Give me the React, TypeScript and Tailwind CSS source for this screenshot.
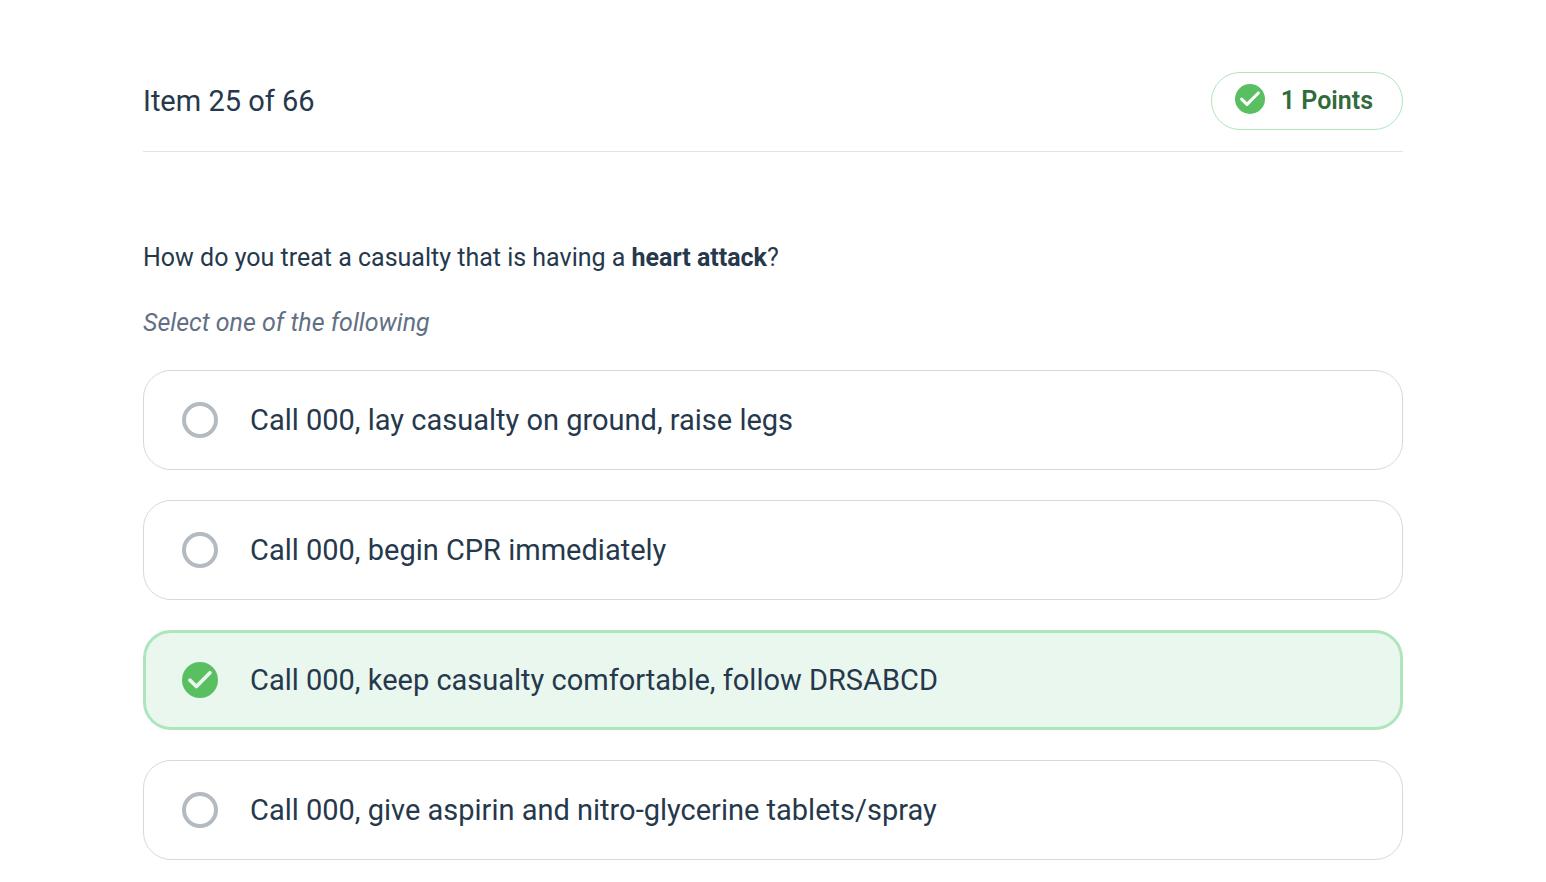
import { useState } from "react";

interface Answer {
  id: string;
  text: string;
}

const answers: Answer[] = [
  { id: "legs", text: "Call 000, lay casualty on ground, raise legs" },
  { id: "cpr", text: "Call 000, begin CPR immediately" },
  { id: "drsabcd", text: "Call 000, keep casualty comfortable, follow DRSABCD" },
  { id: "aspirin", text: "Call 000, give aspirin and nitro-glycerine tablets/spray" },
];

const CheckCircle = ({ className, stroke }: { className: string; stroke: string }) => (
  <svg viewBox="0 0 36 36" className={className} fill="none" aria-hidden="true">
    <circle cx="18" cy="18" r="18" fill="#59bf60" />
    <path
      d="M7.9 18.2 14.4 24.5 28 10.8"
      stroke={stroke}
      strokeWidth="3.7"
      strokeLinecap="round"
      strokeLinejoin="round"
    />
  </svg>
);

const App = () => {
  const [selected, setSelected] = useState("drsabcd");

  return (
    <main className="min-h-screen bg-white px-[143px] pt-[72px] pb-[22px] font-['Roboto','Liberation_Sans',sans-serif] text-[#26384c]">
      <header className="flex items-center justify-between border-b border-[#e2e4e6] pb-[21px]">
        <h1 className="text-[29px] leading-9">Item 25 of 66</h1>
        <div className="flex h-[58px] items-center gap-4 rounded-full border border-[#aee6bd] pr-[29px] pl-[23px]">
          <CheckCircle className="mb-1 size-[30px]" stroke="#ffffff" />
          <span className="text-[25px] leading-8 font-semibold text-[#316a3b]">1 Points</span>
        </div>
      </header>

      <fieldset className="mt-[88px]">
        <legend className="text-[25px] leading-9">
          How do you treat a casualty that is having a <strong className="font-bold">heart attack</strong>?
        </legend>
        <p className="mt-[29px] text-[25px] leading-9 text-[#617084] italic">Select one of the following</p>

        <div className="mt-[29px] flex flex-col gap-[30px]">
          {answers.map((answer) => (
            <label
              key={answer.id}
              className={`flex min-h-[100px] cursor-pointer items-center gap-8 rounded-[28px] ${
                selected === answer.id
                  ? "border-3 border-[#ade6bd] bg-[#eaf7ee] px-9"
                  : "border border-[#d5d8dc] bg-white px-[38px]"
              }`}
            >
              <span className="grid shrink-0">
                <input
                  type="radio"
                  name="answer"
                  value={answer.id}
                  checked={selected === answer.id}
                  onChange={() => setSelected(answer.id)}
                  className="col-start-1 row-start-1 size-9 appearance-none rounded-full border-4 border-[#b3bac2] checked:border-0"
                />
                {selected === answer.id && (
                  <CheckCircle className="pointer-events-none col-start-1 row-start-1 size-9" stroke="#eaf7ee" />
                )}
              </span>
              <span className="text-[29px] leading-9">{answer.text}</span>
            </label>
          ))}
        </div>
      </fieldset>
    </main>
  );
};

export default App;
